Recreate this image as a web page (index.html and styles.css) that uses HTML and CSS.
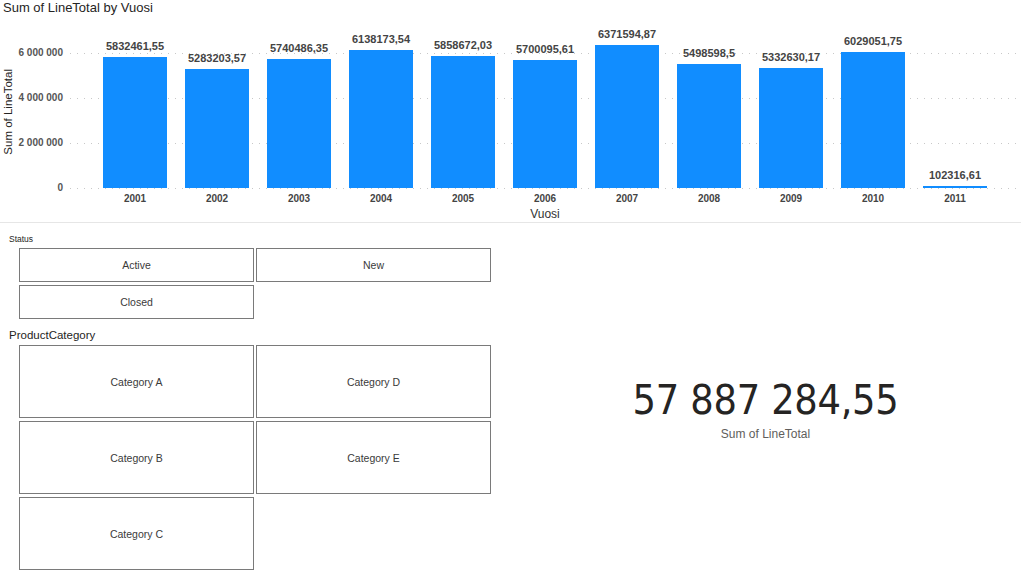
FILE: index.html
```html
<!DOCTYPE html>
<html>
<head>
<meta charset="utf-8">
<link rel="stylesheet" href="styles.css">
</head>
<body>
<div class="page">
  <section class="chart">
    <div class="chart-title">Sum of LineTotal by Vuosi</div>
    <div class="chart-body">
      <div class="y-title"><span>Sum of LineTotal</span></div>
      <div class="y-axis">
        <span>6 000 000</span>
        <span>4 000 000</span>
        <span>2 000 000</span>
        <span>0</span>
      </div>
      <div class="plot-col">
        <div class="plot">
          <div class="grid-lines">
            <div class="gl"></div>
            <div class="gl"></div>
            <div class="gl"></div>
            <div class="gl"></div>
          </div>
          <div class="bars">
            <div class="band"><span class="dl">5832461,55</span><div class="bar" style="height:131.2px"></div></div>
            <div class="band"><span class="dl">5283203,57</span><div class="bar" style="height:118.9px"></div></div>
            <div class="band"><span class="dl">5740486,35</span><div class="bar" style="height:129.2px"></div></div>
            <div class="band"><span class="dl">6138173,54</span><div class="bar" style="height:138.1px"></div></div>
            <div class="band"><span class="dl">5858672,03</span><div class="bar" style="height:131.8px"></div></div>
            <div class="band"><span class="dl">5700095,61</span><div class="bar" style="height:128.3px"></div></div>
            <div class="band"><span class="dl">6371594,87</span><div class="bar" style="height:143.4px"></div></div>
            <div class="band"><span class="dl">5498598,5</span><div class="bar" style="height:123.7px"></div></div>
            <div class="band"><span class="dl">5332630,17</span><div class="bar" style="height:120.0px"></div></div>
            <div class="band"><span class="dl">6029051,75</span><div class="bar" style="height:135.7px"></div></div>
            <div class="band"><span class="dl">102316,61</span><div class="bar" style="height:2.5px"></div></div>
          </div>
        </div>
        <div class="x-labels">
          <span>2001</span><span>2002</span><span>2003</span><span>2004</span><span>2005</span><span>2006</span>
          <span>2007</span><span>2008</span><span>2009</span><span>2010</span><span>2011</span>
        </div>
        <div class="x-title">Vuosi</div>
      </div>
    </div>
  </section>

  <section class="lower">
    <div class="slicers">
      <div class="slicer-label small">Status</div>
      <div class="tiles status-tiles">
        <div class="tile">Active</div>
        <div class="tile">New</div>
        <div class="tile">Closed</div>
      </div>
      <div class="slicer-label">ProductCategory</div>
      <div class="tiles cat-tiles">
        <div class="tile">Category A</div>
        <div class="tile">Category D</div>
        <div class="tile">Category B</div>
        <div class="tile">Category E</div>
        <div class="tile">Category C</div>
      </div>
    </div>
    <div class="card">
      <div class="card-value">57 887 284,55</div>
      <div class="card-label">Sum of LineTotal</div>
    </div>
  </section>
</div>
</body>
</html>
```

FILE: styles.css
```css
html, body {
  margin: 0;
  padding: 0;
  background: #ffffff;
}
body {
  width: 1021px;
  height: 574px;
  overflow: hidden;
  font-family: "Liberation Sans", Arial, sans-serif;
  color: #333333;
}
.page {
  display: flex;
  flex-direction: column;
  width: 1021px;
  height: 574px;
}

/* ---------- chart ---------- */
.chart {
  height: 222px;
  border-bottom: 1px solid #e6e6e6;
  display: flex;
  flex-direction: column;
}
.chart-title {
  height: 16px;
  line-height: 16px;
  font-size: 13px;
  padding-left: 3px;
  color: #252423;
}
.chart-body {
  margin-top: 8px;
  display: flex;
}
.y-title {
  width: 16px;
  height: 164px;
  display: flex;
  align-items: center;
  justify-content: center;
}
.y-title span {
  writing-mode: vertical-rl;
  transform: rotate(180deg);
  font-size: 11.5px;
  color: #252423;
  white-space: nowrap;
  margin-top: 12px;
}
.y-axis {
  width: 47px;
  margin-top: 23px;
  height: 147px;
  display: flex;
  flex-direction: column;
  justify-content: space-between;
  align-items: flex-end;
  font-size: 10px;
  font-weight: bold;
  line-height: 12px;
  color: #555555;
}
.plot-col {
  margin-left: 7px;
  width: 946px;
  display: flex;
  flex-direction: column;
}
.plot {
  height: 164px;
  display: grid;
  grid-template-rows: 164px;
  grid-template-columns: 100%;
}
.grid-lines, .bars {
  grid-area: 1 / 1;
}
.grid-lines {
  margin-top: 29px;
  height: 136px;
  display: flex;
  flex-direction: column;
  justify-content: space-between;
}
.gl {
  height: 1px;
  background: repeating-linear-gradient(to right, #c8c8c8 0 1.5px, transparent 1.5px 7px);
}
.bars {
  padding-left: 24px;
  display: flex;
  align-items: flex-end;
  height: 164px;
}
.band {
  width: 82px;
  display: flex;
  flex-direction: column;
  align-items: center;
  justify-content: flex-end;
}
.dl {
  font-size: 11px;
  font-weight: bold;
  line-height: 14px;
  color: #444444;
  margin-bottom: 4px;
  white-space: nowrap;
}
.bar {
  width: 64px;
  background: #118dff;
}
.x-labels {
  padding-left: 24px;
  height: 18px;
  display: flex;
  align-items: center;
  margin-top: 1px;
}
.x-labels span {
  width: 82px;
  text-align: center;
  font-size: 10px;
  font-weight: bold;
  color: #444444;
}
.x-title {
  padding-left: 24px;
  width: 902px;
  text-align: center;
  font-size: 12px;
  line-height: 14px;
  color: #333333;
}

/* ---------- lower ---------- */
.lower {
  flex: 1;
  display: flex;
}
.slicers {
  width: 501px;
  padding-left: 9px;
  display: flex;
  flex-direction: column;
}
.slicer-label {
  font-size: 11.5px;
  line-height: 16px;
  margin-top: 8px;
  color: #252423;
}
.slicer-label.small {
  font-size: 8.5px;
  line-height: 12px;
  margin-top: 10px;
}
.tiles {
  margin-left: 10px;
  display: grid;
  grid-template-columns: 235px 235px;
  column-gap: 2px;
  row-gap: 3px;
}
.status-tiles {
  margin-top: 3px;
  grid-auto-rows: 34px;
}
.cat-tiles {
  margin-top: 2px;
  grid-auto-rows: 73px;
}
.tile {
  box-sizing: border-box;
  border: 1px solid #7a7a7a;
  display: flex;
  align-items: center;
  justify-content: center;
  font-size: 10.5px;
  color: #3a3a3a;
}
.card {
  flex: 1;
  display: flex;
  flex-direction: column;
  align-items: center;
  padding-top: 155px;
}
.card-value {
  font-family: "DejaVu Sans Condensed", "Liberation Sans", sans-serif;
  font-size: 41px;
  line-height: 44px;
  letter-spacing: -0.3px;
  color: #252423;
}
.card-label {
  font-size: 12px;
  line-height: 16px;
  margin-top: 4px;
  color: #605e5c;
}
```
